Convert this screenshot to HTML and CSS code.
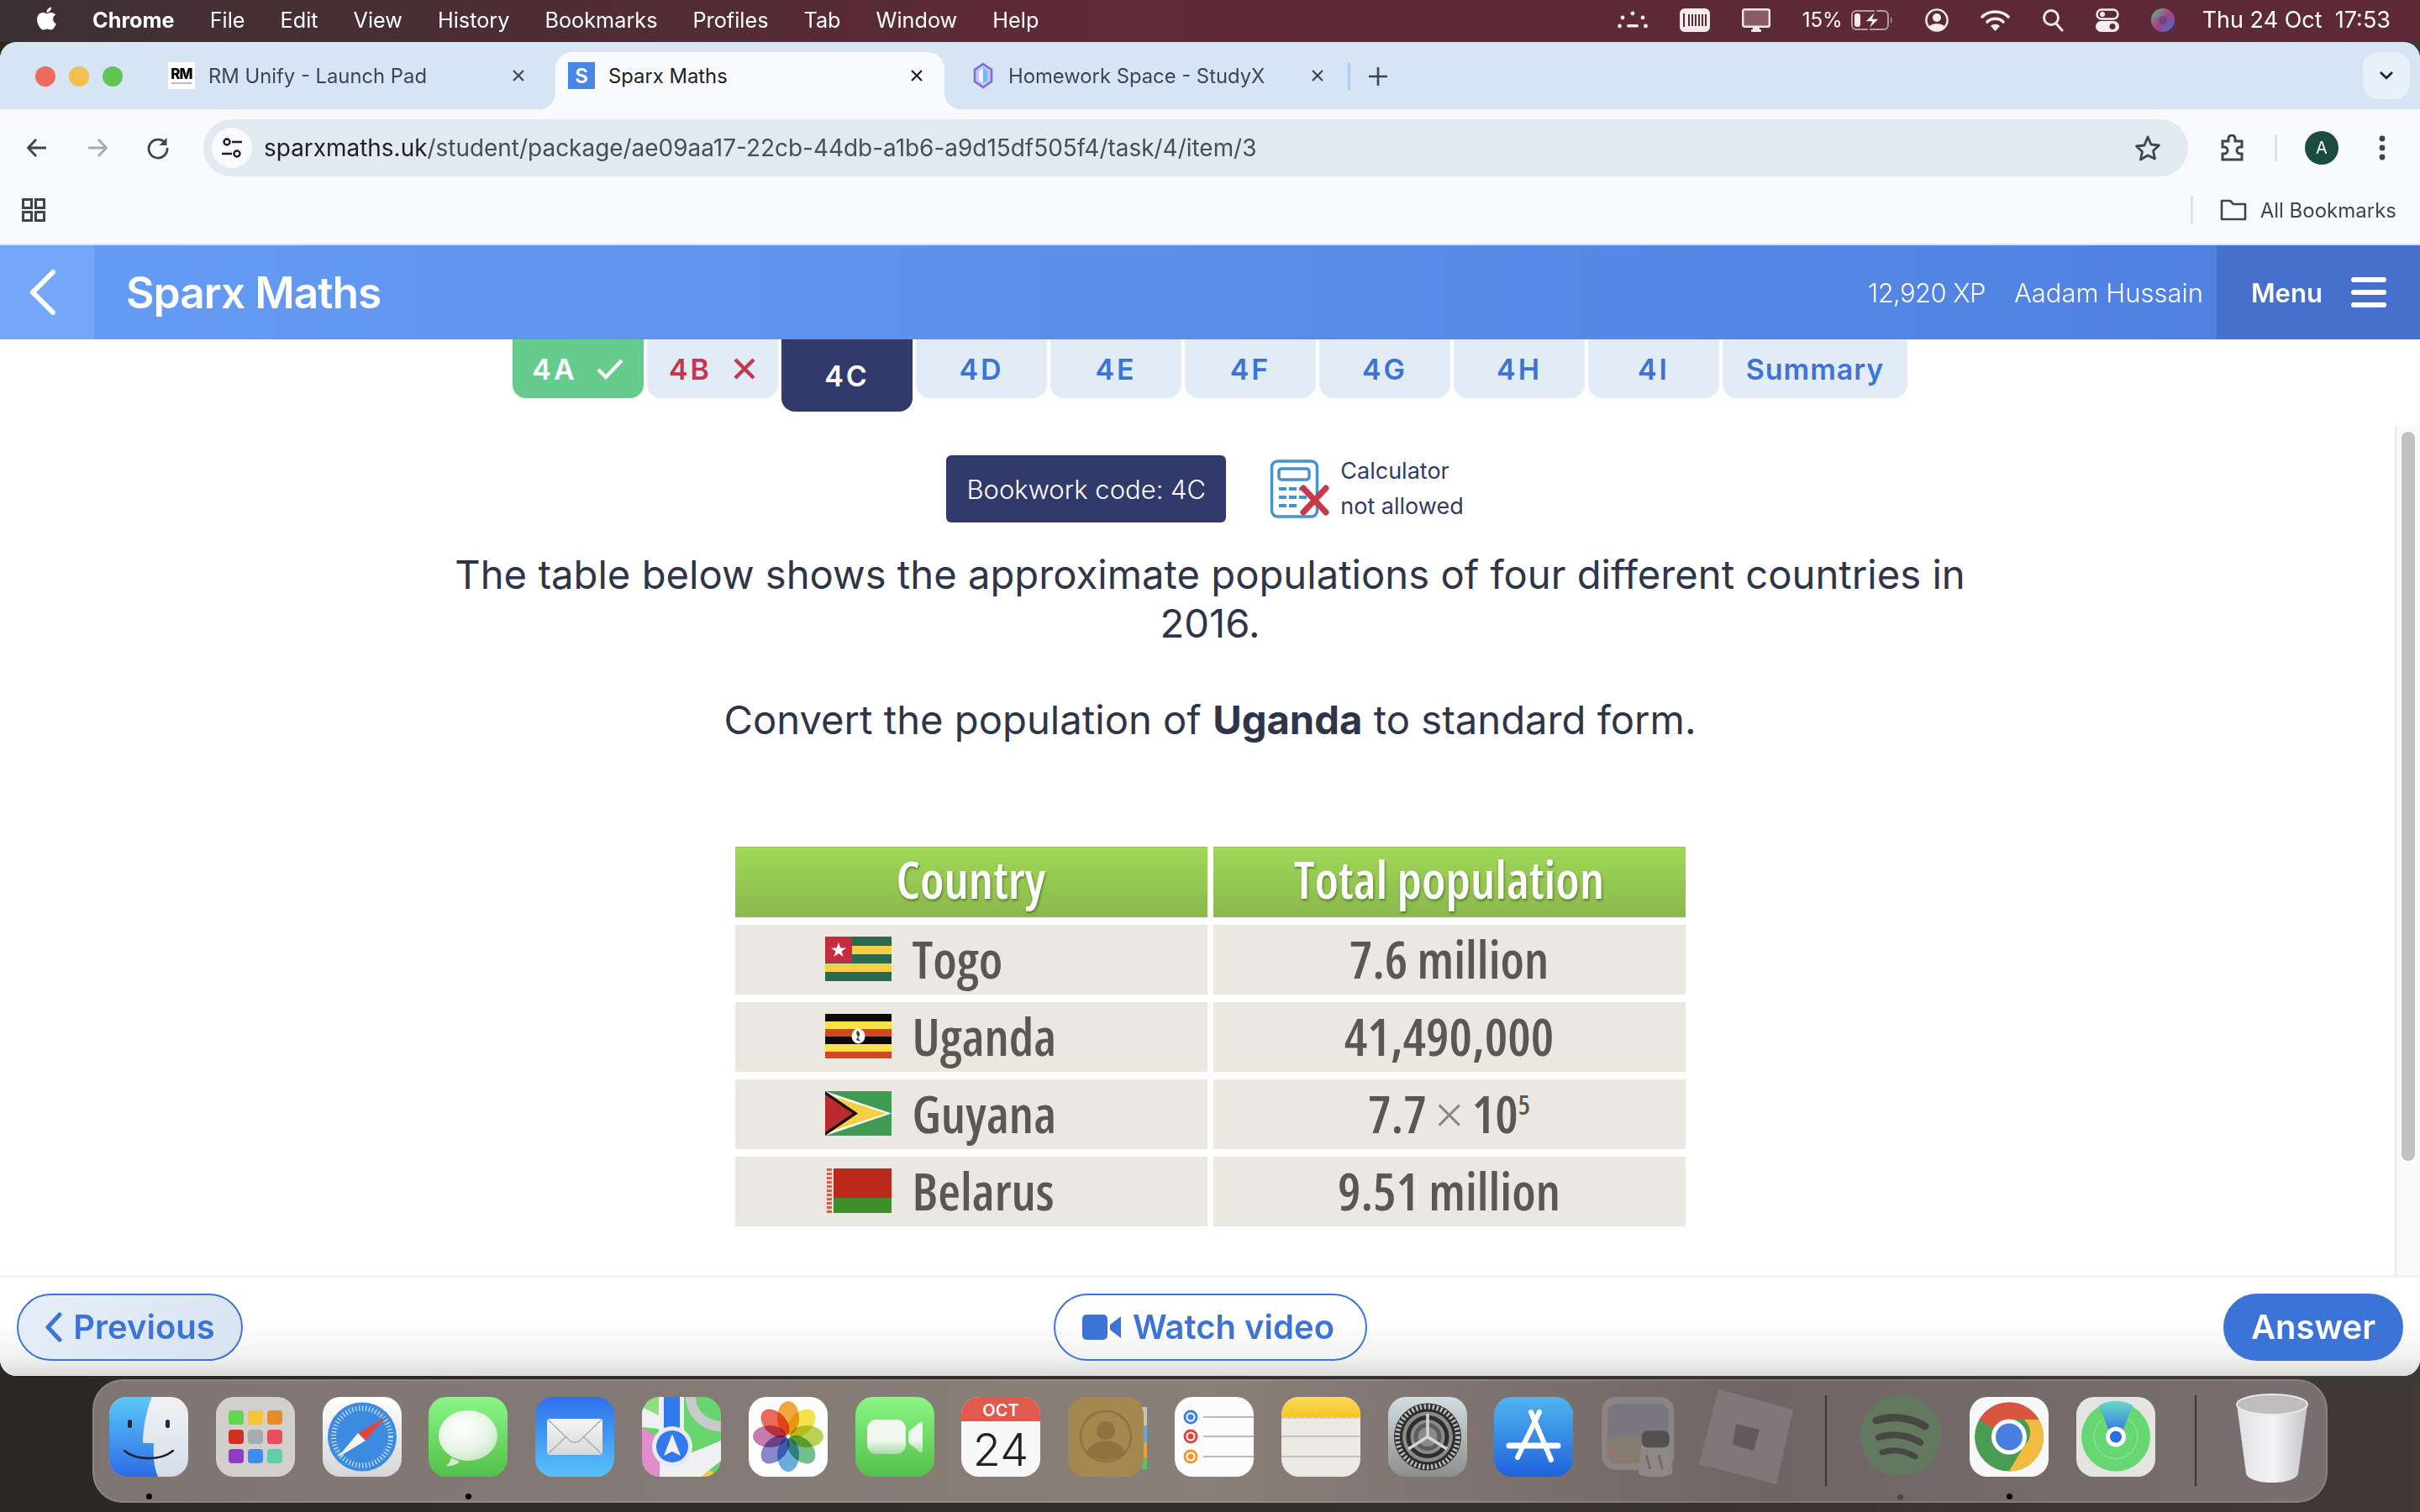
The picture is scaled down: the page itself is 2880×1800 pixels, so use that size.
FILE: index.html
```html
<!DOCTYPE html>
<html lang="en">
<head>
    <meta charset="UTF-8">
    <title>Sparx Maths</title>
    <link rel="stylesheet" href="styles.css">
</head>
<body>
    <!-- mac menu bar -->
    <div class="menubar">
        <div class="menubar-left">
            <svg class="apple" viewBox="3 2 18 20"><path fill="#fff" d="M17.05 20.28c-.98.95-2.05.8-3.08.35-1.09-.46-2.09-.48-3.24 0-1.44.62-2.2.44-3.06-.35C2.79 15.25 3.51 7.59 9.05 7.31c1.35.07 2.29.74 3.08.8 1.18-.24 2.31-.93 3.57-.84 1.51.12 2.65.72 3.4 1.8-3.12 1.87-2.38 5.98.48 7.13-.57 1.5-1.31 2.99-2.54 4.09zM12.03 7.25c-.15-2.23 1.66-4.07 3.74-4.25.29 2.58-2.34 4.5-3.74 4.25z"/></svg>
            <b>Chrome</b>
            <span>File</span>
            <span>Edit</span>
            <span>View</span>
            <span>History</span>
            <span>Bookmarks</span>
            <span>Profiles</span>
            <span>Tab</span>
            <span>Window</span>
            <span>Help</span>
        </div>
        <div class="menubar-right">
            <svg width="36" height="24" viewBox="0 0 36 24"><g fill="#f4eef0"><circle cx="18" cy="4" r="2.4"/><circle cx="6" cy="9" r="2.4"/><circle cx="30" cy="9" r="2.4"/><circle cx="2.5" cy="19" r="2.4"/><circle cx="33.5" cy="19" r="2.4"/><rect x="11" y="17" width="14" height="3.6" rx="1.8"/></g></svg>
            <svg width="36" height="28" viewBox="0 0 36 28"><rect width="36" height="28" rx="6" fill="#f1ebed"/><g fill="#5e2936"><rect x="4" y="6" width="2" height="16"/><rect x="10" y="7" width="2" height="14"/><rect x="14" y="7" width="2" height="14"/><rect x="18" y="7" width="2" height="14"/><rect x="22" y="7" width="2" height="14"/><rect x="26" y="7" width="2" height="14"/><rect x="30" y="7" width="2" height="14"/></g></svg>
            <svg width="34" height="28" viewBox="0 0 34 28"><rect x="1.2" y="1.2" width="31.6" height="20.6" rx="2" fill="#8a5a66" stroke="#f1ebed" stroke-width="2.4"/><rect x="13" y="23" width="8" height="3"  fill="#f1ebed"/><rect x="11" y="25" width="12" height="3" rx="1" fill="#f1ebed"/></svg>
            <div class="battery">
                <span>15%</span>
                <svg width="50" height="24" viewBox="0 0 50 24"><rect x="1" y="1" width="43" height="22" rx="5" fill="none" stroke="#b79aa2" stroke-width="2"/><rect x="4" y="4" width="7" height="16" rx="3" fill="#f1ebed"/><path d="M47 8c2 1 2 7 0 8z" fill="#b79aa2"/><path d="M30 0L16 14h8l-4 10 14-14h-8z" fill="#f4eef0" stroke="#5e2936" stroke-width="1.5"/></svg>
            </div>
            <svg width="28" height="28" viewBox="0 0 28 28"><circle cx="14" cy="14" r="12.6" fill="none" stroke="#f4eef0" stroke-width="2.4"/><circle cx="14" cy="11" r="5" fill="#f4eef0"/><path d="M4.5 22c3-5 16-5 19 0-3 5-16 5-19 0z" fill="#f4eef0"/></svg>
            <svg width="35" height="26" viewBox="0 0 35 26"><g fill="none" stroke="#f4eef0" stroke-width="3.6" stroke-linecap="round"><path d="M2 9C10 1 25 1 33 9"/><path d="M8 15c5-5 14-5 19 0"/></g><path d="M12 20c3-3 8-3 11 0l-5.500 6z" fill="#f4eef0"/></svg>
            <svg width="26" height="28" viewBox="0 0 26 28"><circle cx="11" cy="11" r="8.500" fill="none" stroke="#f4eef0" stroke-width="2.8"/><path d="M17 18l7 8" stroke="#f4eef0" stroke-width="3" stroke-linecap="round"/></svg>
            <svg width="28" height="28" viewBox="0 0 28 28"><rect x="1.500" y="1.500" width="25" height="11" rx="5.500" fill="none" stroke="#f4eef0" stroke-width="2.400"/><circle cx="8" cy="7" r="3" fill="#f4eef0"/><rect y="15" width="28" height="13" rx="6.500" fill="#f4eef0"/><circle cx="20" cy="21.500" r="3.500" fill="#5e2936"/></svg>
            <svg width="28" height="28" viewBox="0 0 28 28"><defs><linearGradient id="siri" x1="0" y1="0" x2="1" y2="1"><stop offset="0" stop-color="#56c58e"/><stop offset=".5" stop-color="#a8408a"/><stop offset="1" stop-color="#2f78d8"/></linearGradient></defs><circle cx="14" cy="14" r="14" fill="url(#siri)"/><circle cx="14" cy="14" r="5" fill="#4a4a78" opacity=".6"/></svg>
            <div class="clock">Thu 24 Oct&nbsp;&nbsp;17:53</div>
        </div>
    </div>

    <div class="window">
        <!-- tab strip -->
        <div class="tabstrip">
            <div class="traffic">
                <i class="light red"></i>
                <i class="light yellow"></i>
                <i class="light green"></i>
            </div>
            <div class="tab tab-first">
                <svg class="favicon" viewBox="0 0 32 32"><rect width="32" height="32" fill="#fff"/><text x="16" y="20" text-anchor="middle" class="rm-text">RM</text><rect x="4" y="24" width="24" height="2" fill="#bbb"/></svg>
                <span class="tab-title">RM Unify - Launch Pad</span>
                <svg class="tab-close" viewBox="0 0 16 16"><path d="M2 2l12 12M14 2L2 14" stroke="#3c4650" stroke-width="2.200" fill="none"/></svg>
            </div>
            <div class="tab tab-active">
                <div class="favicon favicon-s">S</div>
                <span class="tab-title">Sparx Maths</span>
                <svg class="tab-close" viewBox="0 0 16 16"><path d="M2 2l12 12M14 2L2 14" stroke="#1f1f1f" stroke-width="2.200" fill="none"/></svg>
            </div>
            <div class="tab tab-last">
                <svg class="favicon" viewBox="0 0 32 32"><path d="M16 2l10 7v14l-10 7-10-7V9z" fill="#c9c3f7" stroke="#7b6bea" stroke-width="2.500"/><path d="M16 7l5 4v10l-5 4z" fill="#6fb7f5"/><path d="M16 7l-5 4v10l5 4z" fill="#f3f0ff"/></svg>
                <span class="tab-title">Homework Space - StudyX</span>
                <svg class="tab-close" viewBox="0 0 16 16"><path d="M2 2l12 12M14 2L2 14" stroke="#3c4650" stroke-width="2.200" fill="none"/></svg>
            </div>
            <i class="tab-sep"></i>
            <svg class="tab-plus" viewBox="0 0 24 24"><path d="M12 1v22M1 12h22" stroke="#3c4650" stroke-width="2.600"/></svg>
            <div class="tab-search">
                <svg width="18" height="12" viewBox="0 0 18 12"><path d="M2 2l7 7 7-7" stroke="#1f1f1f" stroke-width="2.600" fill="none"/></svg>
            </div>
        </div>

        <!-- address bar -->
        <div class="toolbar">
            <svg class="nav-icon" viewBox="0 0 28 28"><path d="M25 14H4M13 4L3.500 14 13 24" stroke="#3c4650" stroke-width="2.800" fill="none"/></svg>
            <svg class="nav-icon" viewBox="0 0 28 28"><path d="M3 14h21M15 4l9.500 10L15 24" stroke="#a2a9b0" stroke-width="2.800" fill="none"/></svg>
            <svg class="nav-icon" viewBox="0 0 28 28"><path d="M22.500 8A11 11 0 1 0 25 14" stroke="#3c4650" stroke-width="2.800" fill="none"/><path d="M24.500 2v9h-9z" fill="#3c4650"/></svg>
            <div class="urlbar">
                <div class="site-info">
                    <svg width="26" height="26" viewBox="0 0 26 26"><g fill="none" stroke="#1f1f1f" stroke-width="2.400"><circle cx="7" cy="6" r="3.500"/><path d="M13 6h12"/><circle cx="19" cy="20" r="3.500"/><path d="M1 20h12"/></g></svg>
                </div>
                <div class="url"><span class="url-host">sparxmaths.uk</span>/student/package/ae09aa17-22cb-44db-a1b6-a9d15df505f4/task/4/item/3</div>
                <svg class="star" viewBox="0 0 32 32"><path d="M16 3l4 9 9.500 1-7 6.500 2 9.500L16 25l-8.500 5 2-9.500-7-6.500 9.500-1z" fill="none" stroke="#3c4650" stroke-width="2.800" stroke-linejoin="round"/></svg>
            </div>
            <div class="toolbar-right">
                <svg width="32" height="32" viewBox="0 0 32 32"><path d="M3 8h7V5a4 4 0 0 1 8 0v3h8v7h-2a3 3 0 0 0 0 8h2v7H3v-7h2a3 3 0 0 0 0-8H3z" fill="none" stroke="#3c4650" stroke-width="3"/></svg>
                <i class="toolbar-sep"></i>
                <div class="avatar">A</div>
                <svg width="8" height="30" viewBox="0 0 8 30"><g fill="#3c4650"><circle cx="4" cy="4" r="3.400"/><circle cx="4" cy="15" r="3.400"/><circle cx="4" cy="26" r="3.400"/></g></svg>
            </div>
        </div>

        <!-- bookmarks -->
        <div class="bookmarks">
            <svg width="28" height="28" viewBox="0 0 28 28"><g fill="none" stroke="#3c4650" stroke-width="3"><rect x="1.500" y="1.500" width="10" height="10"/><rect x="16.500" y="1.500" width="10" height="10"/><rect x="1.500" y="16.500" width="10" height="10"/><rect x="16.500" y="16.500" width="10" height="10"/></g></svg>
            <div class="bookmarks-right">
                <i class="toolbar-sep"></i>
                <svg width="32" height="26" viewBox="0 0 32 26"><path d="M2 2h10l4 4h14v18H2z" fill="none" stroke="#3c4650" stroke-width="2.600" stroke-linejoin="round"/></svg>
                <span>All Bookmarks</span>
            </div>
        </div>

        <!-- sparx header -->
        <header class="sparx-header">
            <div class="back-box">
                <svg width="34" height="56" viewBox="0 0 34 56"><path d="M29 4L5 28l24 24" fill="none" stroke="#fff" stroke-width="6" stroke-linecap="round" stroke-linejoin="round"/></svg>
            </div>
            <div class="logo">Sparx Maths</div>
            <div class="user-info">
                <span class="xp">12,920 XP</span>
                <span>Aadam Hussain</span>
            </div>
            <div class="menu-btn">
                <span>Menu</span>
                <svg width="42" height="36" viewBox="0 0 42 36"><g fill="#fff"><rect width="42" height="6" rx="3"/><rect y="15" width="42" height="6" rx="3"/><rect y="30" width="42" height="6" rx="3"/></g></svg>
            </div>
        </header>

        <main class="main">
            <div class="task-tabs">
                <div class="task-tab done">4A
                    <svg width="34" height="26" viewBox="0 0 34 26"><path d="M3 14l9 9L31 3" fill="none" stroke="#fff" stroke-width="4.200"/></svg>
                </div>
                <div class="task-tab wrong">4B
                    <svg width="28" height="26" viewBox="0 0 28 26"><path d="M3 2l22 22M25 2L3 24" fill="none" stroke="#c4374e" stroke-width="4.400"/></svg>
                </div>
                <div class="task-tab current">4C</div>
                <div class="task-tab">4D</div>
                <div class="task-tab">4E</div>
                <div class="task-tab">4F</div>
                <div class="task-tab">4G</div>
                <div class="task-tab">4H</div>
                <div class="task-tab">4I</div>
                <div class="task-tab summary">Summary</div>
            </div>

            <div class="code-row">
                <div class="bookwork">Bookwork code: 4C</div>
                <div class="calc">
                    <svg width="72" height="72" viewBox="0 0 72 72">
                        <rect x="2.500" y="3" width="54" height="66" rx="7" fill="none" stroke="#4493cf" stroke-width="3.500"/>
                        <rect x="11" y="12" width="36" height="13" rx="3" fill="none" stroke="#4493cf" stroke-width="3.500"/>
                        <g fill="#4493cf">
                            <rect x="11" y="34" width="9" height="4"/><rect x="23" y="34" width="9" height="4"/><rect x="35" y="34" width="9" height="4"/>
                            <rect x="11" y="44" width="9" height="4"/><rect x="23" y="44" width="9" height="4"/><rect x="35" y="44" width="9" height="4"/>
                            <rect x="11" y="54" width="9" height="4"/><rect x="23" y="54" width="9" height="4"/>
                        </g>
                        <path d="M40 35l27 29M67 35L40 64" stroke="#c9394c" stroke-width="7" stroke-linecap="round"/>
                    </svg>
                    <div class="calc-text">Calculator<br>not allowed</div>
                </div>
            </div>

            <div class="question">
                <p>The table below shows the approximate populations of four different countries in 2016.</p>
                <p class="question-second">Convert the population of <b>Uganda</b> to standard form.</p>
            </div>

            <div class="pop-table">
                <div class="pop-head">Country</div>
                <div class="pop-head">Total population</div>

                <div class="pop-cell pop-country">
                    <svg class="flag" viewBox="0 0 79 53">
                        <rect width="79" height="53" fill="#f6cf45"/>
                        <rect width="79" height="11" fill="#2a6a50"/><rect y="21" width="79" height="11" fill="#2a6a50"/><rect y="42" width="79" height="11" fill="#2a6a50"/>
                        <rect width="32" height="31" fill="#c62b3f"/>
                        <path d="M16 7l2.300 6.500h6.700l-5.400 4.100 2 6.500-5.600-4-5.600 4 2-6.500-5.400-4.100h6.700z" fill="#fff"/>
                    </svg>
                    Togo
                </div>
                <div class="pop-cell">7.6 million</div>

                <div class="pop-cell pop-country">
                    <svg class="flag" viewBox="0 0 79 53">
                        <rect width="79" height="9" fill="#0b0b0b"/><rect y="9" width="79" height="9" fill="#fce24a"/><rect y="18" width="79" height="9" fill="#d2481f"/>
                        <rect y="27" width="79" height="9" fill="#0b0b0b"/><rect y="36" width="79" height="9" fill="#fce24a"/><rect y="45" width="79" height="8" fill="#d2481f"/>
                        <ellipse cx="39.500" cy="26.500" rx="8" ry="9" fill="#fff"/><path d="M38 20c4 2 4 6 1 8l3 5-5-2 2-4c-2-2-2-5-1-7z" fill="#3a3a3a"/>
                    </svg>
                    Uganda
                </div>
                <div class="pop-cell">41,490,000</div>

                <div class="pop-cell pop-country">
                    <svg class="flag" viewBox="0 0 79 53">
                        <rect width="79" height="53" fill="#3f9c52"/>
                        <path d="M0 0l79 26.500L0 53z" fill="#fff"/>
                        <path d="M0 3l73 23.500L0 50z" fill="#f6cf45"/>
                        <path d="M0 0l39 26.500L0 53z" fill="#111"/>
                        <path d="M0 4l33 22.500L0 49z" fill="#ba2b30"/>
                    </svg>
                    Guyana
                </div>
                <div class="pop-cell">7.7<span class="times">×</span>10<sup>5</sup></div>

                <div class="pop-cell pop-country">
                    <svg class="flag" viewBox="0 0 79 53">
                        <rect width="79" height="35" fill="#ba2a1a"/><rect y="35" width="79" height="18" fill="#3f8f28"/>
                        <rect width="10" height="53" fill="#f4dcd6"/><path d="M5 0v53" stroke="#d0604e" stroke-width="6" stroke-dasharray="3 2"/>
                    </svg>
                    Belarus
                </div>
                <div class="pop-cell">9.51 million</div>
            </div>

            <div class="scrollbar"><div class="scroll-thumb"></div></div>
        </main>

        <footer class="bottom-bar">
            <button class="btn btn-prev">
                <svg width="22" height="36" viewBox="0 0 22 36"><path d="M18 3L4 18l14 15" fill="none" stroke="#3b74d6" stroke-width="5" stroke-linecap="round" stroke-linejoin="round"/></svg>
                Previous
            </button>
            <button class="btn btn-video">
                <svg width="46" height="30" viewBox="0 0 46 30"><rect width="30" height="30" rx="5" fill="#3b74d6"/><path d="M33 12l13-10v26L33 18z" fill="#3b74d6"/></svg>
                Watch video
            </button>
            <button class="btn btn-answer">Answer</button>
        </footer>
    </div>

    <!-- dock -->
    <div class="dock">
        <div class="dock-item">
            <svg class="dock-icon" viewBox="0 0 94 95">
                <defs>
                    <linearGradient id="fBlue" x1="0" y1="0" x2="0" y2="1"><stop offset="0" stop-color="#5ac8fa"/><stop offset="1" stop-color="#2e6be6"/></linearGradient>
                    <linearGradient id="fGrey" x1="0" y1="0" x2="0" y2="1"><stop offset="0" stop-color="#f2f2f5"/><stop offset="1" stop-color="#d4deea"/></linearGradient>
                </defs>
                <rect width="94" height="95" rx="21" fill="url(#fGrey)"/>
                <path d="M21 0h30C44 16 40 38 40 55h13c-1 14 0 28 5 40H21A21 21 0 0 1 0 74V21A21 21 0 0 1 21 0z" fill="url(#fBlue)"/>
                <rect x="22" y="27" width="5" height="10" rx="2.500" fill="#1f2a3a"/><rect x="67" y="27" width="5" height="10" rx="2.500" fill="#1f2a3a"/>
                <path d="M18 64c14 12 44 12 58 0" fill="none" stroke="#1c2430" stroke-width="2.500" stroke-linecap="round"/>
            </svg>
            <i class="dock-dot"></i>
        </div>
        <div class="dock-item">
            <svg class="dock-icon" viewBox="0 0 94 95">
                <rect width="94" height="95" rx="21" fill="#d2cfcd"/>
                <rect x="15" y="16" width="18" height="17" rx="4" fill="#5fd84f"/><rect x="38" y="16" width="18" height="17" rx="4" fill="#f7c234"/><rect x="61" y="16" width="18" height="17" rx="4" fill="#e98a2a"/>
                <rect x="15" y="39" width="18" height="17" rx="4" fill="#cf3020"/><rect x="38" y="39" width="18" height="17" rx="4" fill="#a5abaf"/><rect x="61" y="39" width="18" height="17" rx="4" fill="#ea4c62"/>
                <rect x="15" y="62" width="18" height="17" rx="4" fill="#8e3cc8"/><rect x="38" y="62" width="18" height="17" rx="4" fill="#3d8cf0"/><rect x="61" y="62" width="18" height="17" rx="4" fill="#5fcda8"/>
            </svg>
        </div>
        <div class="dock-item">
            <svg class="dock-icon" viewBox="0 0 94 95">
                <defs><linearGradient id="sfBg" x1="0" y1="0" x2="0" y2="1"><stop offset="0" stop-color="#fff"/><stop offset="1" stop-color="#d6d6d6"/></linearGradient></defs>
                <rect width="94" height="95" rx="21" fill="url(#sfBg)"/>
                <circle cx="47" cy="47.500" r="41" fill="#3d8be0"/>
                <circle cx="47" cy="47.500" r="34" fill="none" stroke="#d8e8f8" stroke-width="6" stroke-dasharray="1.200 2.800"/>
                <path d="M76 23L51 52 42 43z" fill="#e0463a"/>
                <path d="M18 72l24-29 9 9z" fill="#f4f4f4"/>
            </svg>
        </div>
        <div class="dock-item">
            <svg class="dock-icon" viewBox="0 0 94 95">
                <defs>
                    <linearGradient id="grGreen" x1="0" y1="0" x2="0" y2="1"><stop offset="0" stop-color="#8bf684"/><stop offset="1" stop-color="#52c04b"/></linearGradient>
                    <radialGradient id="bubble" cx=".4" cy=".35" r=".8"><stop offset="0" stop-color="#fff"/><stop offset=".6" stop-color="#e6f4e4"/><stop offset="1" stop-color="#b4dcb0"/></radialGradient>
                </defs>
                <rect width="94" height="95" rx="21" fill="url(#grGreen)"/>
                <path d="M27 72c-1 5-3 8-6 10 6 1 12-1 16-5z" fill="#d0ecce"/>
                <ellipse cx="47" cy="46" rx="35" ry="30" fill="url(#bubble)"/>
            </svg>
            <i class="dock-dot"></i>
        </div>
        <div class="dock-item">
            <svg class="dock-icon" viewBox="0 0 94 95">
                <defs>
                    <linearGradient id="mailBg" x1="0" y1="0" x2="0" y2="1"><stop offset="0" stop-color="#2f6fec"/><stop offset="1" stop-color="#5ac2fb"/></linearGradient>
                    <linearGradient id="mailEnv" x1="0" y1="0" x2="0" y2="1"><stop offset="0" stop-color="#f6f6f6"/><stop offset="1" stop-color="#d8d8d8"/></linearGradient>
                </defs>
                <rect width="94" height="95" rx="21" fill="url(#mailBg)"/>
                <rect x="14" y="26" width="66" height="43" rx="3" fill="url(#mailEnv)"/>
                <path d="M15 27l26 25c3 3 9 3 12 0l26-25M15 68l22-21M79 68L57 47" fill="none" stroke="#aeaeae" stroke-width="1.500"/>
            </svg>
        </div>
        <div class="dock-item">
            <svg class="dock-icon" viewBox="0 0 94 95">
                <defs><clipPath id="mapClip"><rect width="94" height="95" rx="21"/></clipPath></defs>
                <g clip-path="url(#mapClip)">
                    <rect width="94" height="95" fill="#68d46e"/>
                    <path d="M0 0h20v22L0 12z" fill="#8de07c"/>
                    <path d="M0 12l20 10v16L0 36z" fill="#f0f0f2"/>
                    <path d="M20 0h30v50H20z" fill="#f0f0f2"/>
                    <path d="M26 0h19v44H26z" fill="#3478ee"/>
                    <path d="M0 36l21 14v45H0z" fill="#e28ccb"/>
                    <path d="M21 60h30v35H21z" fill="#f0f0f2"/>
                    <path d="M50 70l44 25H50z" fill="#f7cc3c"/>
                    <path d="M50 70l44-18 0 24-24 19h-20z" fill="#f0f0f2"/>
                    <path d="M58 0c0 16 12 34 36 35" fill="none" stroke="#c9c9cc" stroke-width="12"/>
                    <circle cx="36" cy="59" r="24" fill="#e6ecf2"/>
                    <circle cx="36" cy="59" r="19" fill="#3478ee"/>
                    <path d="M36 44l10 26-10-5-10 5z" fill="#f0f0f2"/>
                </g>
            </svg>
        </div>
        <div class="dock-item">
            <svg class="dock-icon" viewBox="0 0 94 95">
                <rect width="94" height="95" rx="21" fill="#fdfdfd"/>
                <g class="petals">
                    <ellipse cx="47" cy="25" rx="13" ry="20" fill="#f2a93c"/>
                    <ellipse cx="47" cy="25" rx="13" ry="20" fill="#f5e44a" transform="rotate(45 47 47)"/>
                    <ellipse cx="47" cy="25" rx="13" ry="20" fill="#bcd452" transform="rotate(90 47 47)"/>
                    <ellipse cx="47" cy="25" rx="13" ry="20" fill="#74bf90" transform="rotate(135 47 47)"/>
                    <ellipse cx="47" cy="25" rx="13" ry="20" fill="#6aaee0" transform="rotate(180 47 47)"/>
                    <ellipse cx="47" cy="25" rx="13" ry="20" fill="#8688cc" transform="rotate(225 47 47)"/>
                    <ellipse cx="47" cy="25" rx="13" ry="20" fill="#c67cb0" transform="rotate(270 47 47)"/>
                    <ellipse cx="47" cy="25" rx="13" ry="20" fill="#ec6a5c" transform="rotate(315 47 47)"/>
                </g>
            </svg>
        </div>
        <div class="dock-item">
            <svg class="dock-icon" viewBox="0 0 94 95">
                <defs><linearGradient id="ftCam" x1="0" y1="0" x2="0" y2="1"><stop offset="0" stop-color="#f2f7f0"/><stop offset=".6" stop-color="#f2f7f0"/><stop offset="1" stop-color="#a8dca4"/></linearGradient></defs>
                <rect width="94" height="95" rx="21" fill="url(#grGreen)"/>
                <rect x="14" y="27" width="46" height="41" rx="11" fill="url(#ftCam)"/>
                <path d="M63 44c0-2 1-4 3-5l11-9c2-1 3 0 3 2v32c0 2-1 3-3 2l-11-9c-2-1-3-3-3-5z" fill="url(#ftCam)"/>
            </svg>
        </div>
        <div class="dock-item">
            <svg class="dock-icon" viewBox="0 0 94 95">
                <defs><clipPath id="calClip"><rect width="94" height="95" rx="21"/></clipPath></defs>
                <g clip-path="url(#calClip)">
                    <rect width="94" height="95" fill="#f8f8f8"/>
                    <rect width="94" height="29" fill="#e15a4e"/>
                </g>
                <text x="47" y="23" text-anchor="middle" class="cal-month">OCT</text>
                <text x="47" y="82" text-anchor="middle" class="cal-day">24</text>
            </svg>
        </div>
        <div class="dock-item">
            <svg class="dock-icon" viewBox="0 0 94 95">
                <rect x="88" y="12" width="6" height="22" fill="#c8c4bc"/><rect x="88" y="34" width="6" height="20" fill="#58a9e4"/><rect x="88" y="54" width="6" height="18" fill="#e9a23c"/><rect x="88" y="72" width="6" height="14" fill="#58c46a"/>
                <rect width="90" height="95" rx="21" fill="#a58750"/>
                <circle cx="45" cy="47" r="30" fill="none" stroke="#8f7240" stroke-width="2.500"/>
                <circle cx="45" cy="40" r="11" fill="#8f7240"/>
                <path d="M22 66c6-18 40-18 46 0-12 12-34 12-46 0z" fill="#8f7240"/>
            </svg>
        </div>
        <div class="dock-item">
            <svg class="dock-icon" viewBox="0 0 94 95">
                <rect width="94" height="95" rx="21" fill="#fbfbfb"/>
                <circle cx="19" cy="24" r="7" fill="#fff" stroke="#3c7fe8" stroke-width="3"/><circle cx="19" cy="24" r="3.500" fill="#3c7fe8"/>
                <circle cx="19" cy="47" r="7" fill="#fff" stroke="#e0443a" stroke-width="3"/><circle cx="19" cy="47" r="3.500" fill="#e0443a"/>
                <circle cx="19" cy="71" r="7" fill="#fff" stroke="#ee9a2c" stroke-width="3"/><circle cx="19" cy="71" r="3.500" fill="#ee9a2c"/>
                <path d="M34 24h60M34 47h60M34 71h60" stroke="#b9b9b9" stroke-width="2"/>
            </svg>
        </div>
        <div class="dock-item">
            <svg class="dock-icon" viewBox="0 0 94 95">
                <defs>
                    <clipPath id="noteClip"><rect width="94" height="95" rx="21"/></clipPath>
                    <linearGradient id="noteTop" x1="0" y1="0" x2="0" y2="1"><stop offset="0" stop-color="#fbd95c"/><stop offset="1" stop-color="#f6c623"/></linearGradient>
                </defs>
                <g clip-path="url(#noteClip)">
                    <rect width="94" height="95" fill="#ece9e2"/>
                    <rect width="94" height="24" fill="url(#noteTop)"/>
                    <path d="M0 25h94" stroke="#bcb9b0" stroke-width="2" stroke-dasharray="1 1"/>
                    <path d="M0 47h94M0 71h94" stroke="#c4c2bc" stroke-width="2"/>
                </g>
            </svg>
        </div>
        <div class="dock-item">
            <svg class="dock-icon" viewBox="0 0 94 95">
                <defs><linearGradient id="setBg" x1="0" y1="0" x2="0" y2="1"><stop offset="0" stop-color="#d3dde2"/><stop offset="1" stop-color="#8e8e8c"/></linearGradient></defs>
                <rect width="94" height="95" rx="21" fill="url(#setBg)"/>
                <circle cx="47" cy="47.500" r="40" fill="#2d2d2d"/>
                <circle cx="47" cy="47.500" r="36" fill="none" stroke="#bcbcbc" stroke-width="6" stroke-dasharray="2.500 2.500"/>
                <circle cx="47" cy="47.500" r="30" fill="#8a8a8a"/>
                <circle cx="47" cy="47.500" r="23" fill="none" stroke="#2e2e2e" stroke-width="5"/>
                <circle cx="47" cy="47.500" r="14" fill="none" stroke="#5c5c5c" stroke-width="5"/>
                <path d="M47 47.500V20M47 47.500L24 62M47 47.500L70 62" stroke="#d6d6d6" stroke-width="3.500"/>
            </svg>
        </div>
        <div class="dock-item">
            <svg class="dock-icon" viewBox="0 0 94 95">
                <defs><linearGradient id="asBg" x1="0" y1="0" x2="0" y2="1"><stop offset="0" stop-color="#50b4f0"/><stop offset="1" stop-color="#2063dc"/></linearGradient></defs>
                <rect width="94" height="95" rx="21" fill="url(#asBg)"/>
                <g stroke="#fff" stroke-linecap="round" fill="none">
                    <path d="M54 18L28 72" stroke-width="6"/>
                    <path d="M44 18l24 57" stroke-width="6"/>
                    <path d="M18 58h58" stroke-width="7"/>
                </g>
            </svg>
        </div>
        <div class="dock-item">
            <svg class="dock-icon" viewBox="0 0 100 104">
                <rect width="94" height="95" rx="18" fill="#8d8486"/>
                <rect x="7" y="9" width="80" height="77" rx="12" fill="#79767f"/>
                <path d="M7 52h80v22a12 12 0 0 1-12 12H19A12 12 0 0 1 7 74z" fill="#837a72"/>
                <path d="M8 62l12 5 8 12 12-1v8H19A12 12 0 0 1 8 74z" fill="#8d7a6c"/>
                <path d="M52 60h36l4 38c0 4-8 6-22 6s-22-2-22-6z" fill="#8e8987"/>
                <rect x="52" y="44" width="36" height="22" rx="8" fill="#545050"/>
                <path d="M58 76l5 18M74 76l5 18" stroke="#6e6a69" stroke-width="3"/>
            </svg>
        </div>
        <div class="dock-item dock-roblox">
            <svg width="112" height="113" viewBox="0 0 112 113"><path d="M23 0l89 24-20 89L0 89z" fill="#7f7779"/><path d="M44 41l28 7-7 25-25-7z" fill="#625b5d"/></svg>
        </div>
        <i class="dock-sep"></i>
        <div class="dock-item dock-spotify">
            <svg width="96" height="96" viewBox="0 0 96 96"><circle cx="48" cy="48" r="48" fill="#62795f"/><g fill="none" stroke="#474843" stroke-linecap="round"><path d="M19 30c18-6 40-4 58 7" stroke-width="9"/><path d="M22 50c16-5 34-3 49 6" stroke-width="8"/><path d="M26 68c13-4 27-2 39 5" stroke-width="7"/></g></svg>
            <i class="dock-dot dock-dot-dim"></i>
        </div>
        <div class="dock-item dock-chrome">
            <svg class="dock-icon" viewBox="0 0 94 95">
                <rect width="94" height="95" rx="21" fill="#f7f7f7"/>
                <circle cx="47" cy="47.500" r="41" fill="#4a9c52"/>
                <path d="M47 6.500a41 41 0 0 1 35.500 20.500H47a20.500 20.500 0 0 0-18 10.700L11.500 27A41 41 0 0 1 47 6.500z" fill="#d95540"/>
                <path d="M82.500 27A41 41 0 0 1 47 88.500L65 58a20.500 20.500 0 0 0 0-31z" fill="#f2bc41"/>
                <circle cx="47" cy="47.500" r="21" fill="#fff"/>
                <circle cx="47" cy="47.500" r="16" fill="#4a7ee0"/>
            </svg>
            <i class="dock-dot"></i>
        </div>
        <div class="dock-item">
            <svg class="dock-icon" viewBox="0 0 94 95">
                <defs><linearGradient id="fmBeam" x1="0" y1="0" x2="0" y2="1"><stop offset="0" stop-color="#6ad8c8"/><stop offset="1" stop-color="#2a6fe0"/></linearGradient></defs>
                <rect width="94" height="95" rx="21" fill="#e4e4e2"/>
                <circle cx="47" cy="47.500" r="41" fill="#66d772"/>
                <circle cx="47" cy="47.500" r="26" fill="none" stroke="#9be8a0" stroke-width="1"/>
                <path d="M27 10a41 41 0 0 1 40 0L53 46H41z" fill="url(#fmBeam)"/>
                <circle cx="47" cy="47.500" r="12" fill="#fff"/>
                <circle cx="47" cy="47.500" r="7" fill="#2a6fe0"/>
            </svg>
        </div>
        <i class="dock-sep dock-sep-last"></i>
        <div class="dock-item dock-trash">
            <svg width="86" height="106" viewBox="0 0 86 106">
                <defs><linearGradient id="trashBody" x1="0" y1="0" x2="1" y2="0"><stop offset="0" stop-color="#e0e0e2"/><stop offset=".5" stop-color="#f4f4f6"/><stop offset="1" stop-color="#c6c6c8"/></linearGradient></defs>
                <path d="M1 13l11 82c1 6 13 11 31 11s30-5 31-11l11-82z" fill="url(#trashBody)"/>
                <ellipse cx="43" cy="13" rx="42" ry="12" fill="#bfbdbd" stroke="#e8e8e8" stroke-width="2"/>
            </svg>
        </div>
    </div>
</body>
</html>
```

FILE: styles.css
```css
* {
    margin: 0;
    padding: 0;
    box-sizing: border-box;
}

body {
    width: 2880px;
    height: 1800px;
    overflow: hidden;
    font-family: 'Inter', 'Liberation Sans', sans-serif;
    background: linear-gradient(90deg, #2a2725 0%, #332f2c 50%, #403a37 100%);
}

/* menu bar */
.menubar {
    height: 50px;
    padding: 0 35px 3px 42px;
    display: flex;
    align-items: center;
    justify-content: space-between;
    color: #fff;
    font-size: 25.25px;
    background: linear-gradient(90deg, #3c3034 0%, #5f2936 45%, #5e2936 100%);
}

.menubar-left {
    display: flex;
    align-items: center;
    gap: 42px;
}

.menubar-left b {
    font-weight: 700;
}

.apple {
    width: 27px;
    height: 32px;
    margin-top: -4px;
    margin-right: -1px;
}

.menubar-right {
    display: flex;
    align-items: center;
    gap: 38px;
}

.battery {
    display: flex;
    align-items: center;
    gap: 10px;
    font-size: 24px;
}

.clock {
    font-size: 27px;
    margin-left: -5px;
}

/* browser window */
.window {
    height: 1588px;
    display: flex;
    flex-direction: column;
    overflow: hidden;
    border-radius: 20px;
    background: #f8faff;
}

.tabstrip {
    height: 80px;
    padding-top: 12px;
    display: flex;
    background: #d6e4f4;
}

.traffic {
    width: 188px;
    padding: 17px 0 0 42px;
    display: flex;
    gap: 16px;
}

.light {
    width: 24px;
    height: 24px;
    border-radius: 50%;
}

.red { background: #ec6a5e; }
.yellow { background: #f4bf4f; }
.green { background: #61c554; }

.tab {
    height: 68px;
    padding: 0 0 12px 12px;
    display: flex;
    align-items: center;
    font-size: 23.800px;
    color: #3c4650;
}

.tab-first {
    width: 473px;
}

.tab-first .tab-close {
    margin-right: 36px;
}

.tab-active {
    position: relative;
    width: 463px;
    padding-left: 15px;
    color: #1f1f1f;
    background: #f8faff;
    border-radius: 20px 20px 0 0;
}

/* the little flares at the foot of the active tab */
.tab-active::before,
.tab-active::after {
    content: "";
    position: absolute;
    bottom: 0;
    width: 20px;
    height: 20px;
}

.tab-active::before {
    left: -20px;
    background: radial-gradient(circle at 0 0, transparent 20px, #f8faff 20.5px);
}

.tab-active::after {
    right: -20px;
    background: radial-gradient(circle at 100% 0, transparent 20px, #f8faff 20.5px);
}

.tab-last {
    width: 482px;
    padding-left: 30px;
}

.tab-last .tab-title {
    margin-left: 14px;
}

.tab-last .tab-close {
    margin-right: 30px;
}

.favicon {
    width: 32px;
    height: 32px;
    flex-shrink: 0;
}

.favicon-s {
    display: flex;
    align-items: center;
    justify-content: center;
    color: #fff;
    font-size: 24px;
    font-weight: 600;
    background: #4a86e8;
}

.rm-text {
    font-size: 17px;
    font-weight: 800;
    letter-spacing: -1px;
    fill: #000;
}

.tab-title {
    margin-left: 16px;
    flex: 1;
    white-space: nowrap;
}

.tab-close {
    width: 16px;
    height: 16px;
    margin-right: 25px;
}

.tab-sep {
    width: 3px;
    height: 32px;
    margin: 13px 0 0 -2px;
    background: #a8cdf0;
}

.tab-plus {
    width: 24px;
    height: 24px;
    margin: 17px 0 0 21px;
}

.tab-search {
    width: 56px;
    height: 56px;
    margin-left: auto;
    margin-right: 12px;
    display: flex;
    align-items: center;
    justify-content: center;
    border-radius: 18px;
    background: #e8f1fb;
}

.toolbar {
    height: 80px;
    padding: 12px 0 0 30px;
    display: flex;
    align-items: flex-start;
    background: #f8faff;
}

.nav-icon {
    width: 28px;
    height: 28px;
    margin: 20px 44px 0 0;
}

.nav-icon:nth-child(3) {
    margin-right: 0;
}

.urlbar {
    width: 2362px;
    height: 68px;
    margin-left: 40px;
    padding: 0 32px 0 10px;
    display: flex;
    align-items: center;
    border-radius: 34px;
    background: #e1e9f1;
}

.site-info {
    width: 48px;
    height: 48px;
    margin-right: 14px;
    display: flex;
    align-items: center;
    justify-content: center;
    border-radius: 50%;
    background: #f8faff;
}

.url {
    flex: 1;
    font-size: 27.950px;
    color: #474d55;
    white-space: nowrap;
}

.url-host {
    color: #1f1f1f;
}

.star {
    width: 32px;
    height: 32px;
}

.toolbar-right {
    height: 68px;
    padding-left: 38px;
    display: flex;
    align-items: center;
}

.toolbar-right .toolbar-sep {
    margin-left: 33px;
    margin-right: 33px;
}

.toolbar-sep {
    width: 3px;
    height: 32px;
    margin: 0 32px 0 22px;
    background: #d3e3f4;
}

.avatar {
    width: 40px;
    height: 40px;
    margin-right: 48px;
    display: flex;
    align-items: center;
    justify-content: center;
    border-radius: 50%;
    color: #fff;
    font-size: 20px;
    background: #1b4d3e;
}

.bookmarks {
    height: 82px;
    padding: 0 28px 0 26px;
    display: flex;
    align-items: center;
    justify-content: space-between;
    font-size: 24px;
    color: #3c4650;
    background: #f8faff;
    border-bottom: 2px solid #dde3ea;
}

.bookmarks-right {
    display: flex;
    align-items: center;
}

.bookmarks-right span {
    margin-left: 16px;
}

/* sparx header */
.sparx-header {
    height: 112px;
    flex-shrink: 0;
    display: flex;
    align-items: center;
    color: #fff;
    background: linear-gradient(90deg, #659cf5 0%, #4e7fdf 100%);
}

.back-box {
    width: 112px;
    height: 112px;
    padding-left: 34px;
    display: flex;
    align-items: center;
    background: #74a7f8;
}

.logo {
    margin-left: 38px;
    font-size: 51.500px;
    font-weight: 600;
    letter-spacing: -1px;
}

.user-info {
    margin-left: auto;
    margin-right: 16px;
    display: flex;
    gap: 34px;
    font-size: 31px;
    font-weight: 300;
}

.xp {
    letter-spacing: -0.6px;
}

.menu-btn {
    width: 242px;
    height: 112px;
    padding: 0 40px 0 41px;
    display: flex;
    align-items: center;
    justify-content: space-between;
    font-size: 31px;
    font-weight: 600;
    background: #4670cc;
}

/* main question area */
.main {
    position: relative;
    flex: 1;
    display: flex;
    flex-direction: column;
    align-items: center;
    background: #fff;
}

.task-tabs {
    height: 86px;
    display: flex;
    align-items: flex-start;
    gap: 4px;
}

.task-tab {
    width: 156px;
    height: 70px;
    display: flex;
    align-items: center;
    justify-content: center;
    gap: 22px;
    font-size: 34px;
    font-weight: 600;
    letter-spacing: 3px;
    color: #3b74d6;
    border-radius: 0 0 16px 16px;
    background: #e2ecf7;
}

.task-tab.done {
    color: #fff;
    background: #66cc8e;
}

.task-tab.wrong {
    gap: 25px;
    color: #c4374e;
}

.task-tab.current {
    height: 86px;
    color: #fff;
    background: #323a6b;
}

.task-tab.summary {
    width: 220px;
    letter-spacing: 1px;
}

.code-row {
    margin-top: 50px;
    margin-right: 12px;
    display: flex;
    align-items: center;
    gap: 52px;
}

.bookwork {
    width: 333px;
    height: 80px;
    display: flex;
    align-items: center;
    justify-content: center;
    color: #fff;
    font-size: 31px;
    font-weight: 300;
    border-radius: 6px;
    background: #323a6b;
}

.calc {
    display: flex;
    align-items: center;
    gap: 12px;
}

.calc-text {
    font-size: 27px;
    line-height: 42px;
    color: #323a6b;
}

.question {
    width: 1860px;
    margin-top: 31px;
    text-align: center;
    font-size: 47.200px;
    line-height: 58px;
    color: #2f3548;
}

.question-second {
    margin-top: 57px;
}

/* population table, flat image in the original */
.pop-table {
    margin-top: 122px;
    display: grid;
    grid-template-columns: 562px 562px;
    grid-template-rows: 84px repeat(4, 83px);
    column-gap: 7px;
    row-gap: 9px;
    font-family: 'Open Sans', sans-serif;
    font-stretch: condensed;
    font-size: 61.500px;
    font-weight: 600;
}

.pop-head {
    padding-bottom: 10px;
    display: flex;
    align-items: center;
    justify-content: center;
    color: #fff;
    text-shadow: 1px 2px 3px rgba(50, 70, 20, 0.6);
    border-top: 1px solid #8fc74f;
    background: linear-gradient(180deg, #a0d858 0%, #8ab84c 100%);
}

.pop-cell {
    padding-bottom: 3px;
    display: flex;
    align-items: center;
    justify-content: center;
    color: #5b5852;
    background: #ebe8e1;
}

.pop-country {
    padding-left: 107px;
    justify-content: flex-start;
    gap: 25px;
}

.flag {
    width: 79px;
    height: 53px;
    flex-shrink: 0;
}

.times {
    margin: 0 11px;
    font-size: 78px;
    font-weight: 300;
    line-height: 1;
    color: #8a8780;
}

.pop-cell sup {
    font-size: 32px;
    align-self: flex-start;
    margin-top: 8px;
}

.scrollbar {
    position: absolute;
    top: 103px;
    right: 0;
    bottom: 0;
    width: 30px;
    padding: 7px 6px 0 6px;
    background: #fafafa;
    border-left: 2px solid #e8e8e8;
}

.scroll-thumb {
    width: 16px;
    height: 868px;
    border-radius: 8px;
    background: #c1c1c1;
}

/* bottom buttons */
.bottom-bar {
    height: 120px;
    flex-shrink: 0;
    padding: 0 20px;
    display: grid;
    grid-template-columns: 1fr auto 1fr;
    align-items: center;
    border-top: 3px solid #f0f4fa;
    background: linear-gradient(180deg, #fff 45%, #f2f2f2 80%, #dcdcdc 100%);
}

.btn {
    height: 80px;
    display: flex;
    align-items: center;
    justify-content: center;
    font-family: inherit;
    font-size: 40px;
    font-weight: 600;
    color: #3b74d6;
    border: 2px solid #3b74d6;
    border-radius: 40px;
    background: #fff;
}

.btn-prev {
    width: 269px;
    gap: 12px;
    justify-self: start;
    background: linear-gradient(135deg, #e6eff9 0%, #d8e3f1 100%);
}

.btn-video {
    width: 373px;
    gap: 14px;
    padding-right: 4px;
    background: transparent;
}

.btn-answer {
    width: 214px;
    justify-self: end;
    color: #fff;
    background: #3b74d6;
}

/* dock */
.dock {
    width: 2660px;
    height: 147px;
    margin: 4px auto 0;
    padding: 21px 0 0 20px;
    display: flex;
    align-items: flex-start;
    gap: 32.8px;
    border-radius: 36px;
    background: linear-gradient(90deg, #7e7471 0%, #8a7f78 50%, #6f6565 75%, #7a6f70 100%);
    box-shadow: inset 0 0 0 2px rgba(255, 255, 255, 0.12);
}

.dock-item {
    display: flex;
    flex-direction: column;
    align-items: center;
    gap: 20px;
}

.dock-icon {
    width: 94px;
    height: 95px;
    display: block;
}

.dock-dot {
    width: 7px;
    height: 7px;
    border-radius: 50%;
    background: #000;
}

.dock-dot-dim {
    background: #4a4a4a;
}

.petals ellipse {
    mix-blend-mode: multiply;
}

.dock-roblox {
    margin: -9px 0 0 -10px;
}

.dock-sep {
    width: 2px;
    height: 108px;
    margin: -2px 0 0 5px;
    background: #3a3535;
}

.dock-spotify {
    margin: -2px 0 0 7px;
    gap: 22px;
}

.dock-chrome {
    margin-left: 2px;
}

.dock-sep-last {
    margin-left: 14px;
}

.dock-trash {
    margin: -4px 0 0 14px;
}

.cal-month {
    font-size: 20px;
    font-weight: 600;
    fill: #fff;
}

.cal-day {
    font-size: 54px;
    font-weight: 300;
    fill: #222;
}
```
